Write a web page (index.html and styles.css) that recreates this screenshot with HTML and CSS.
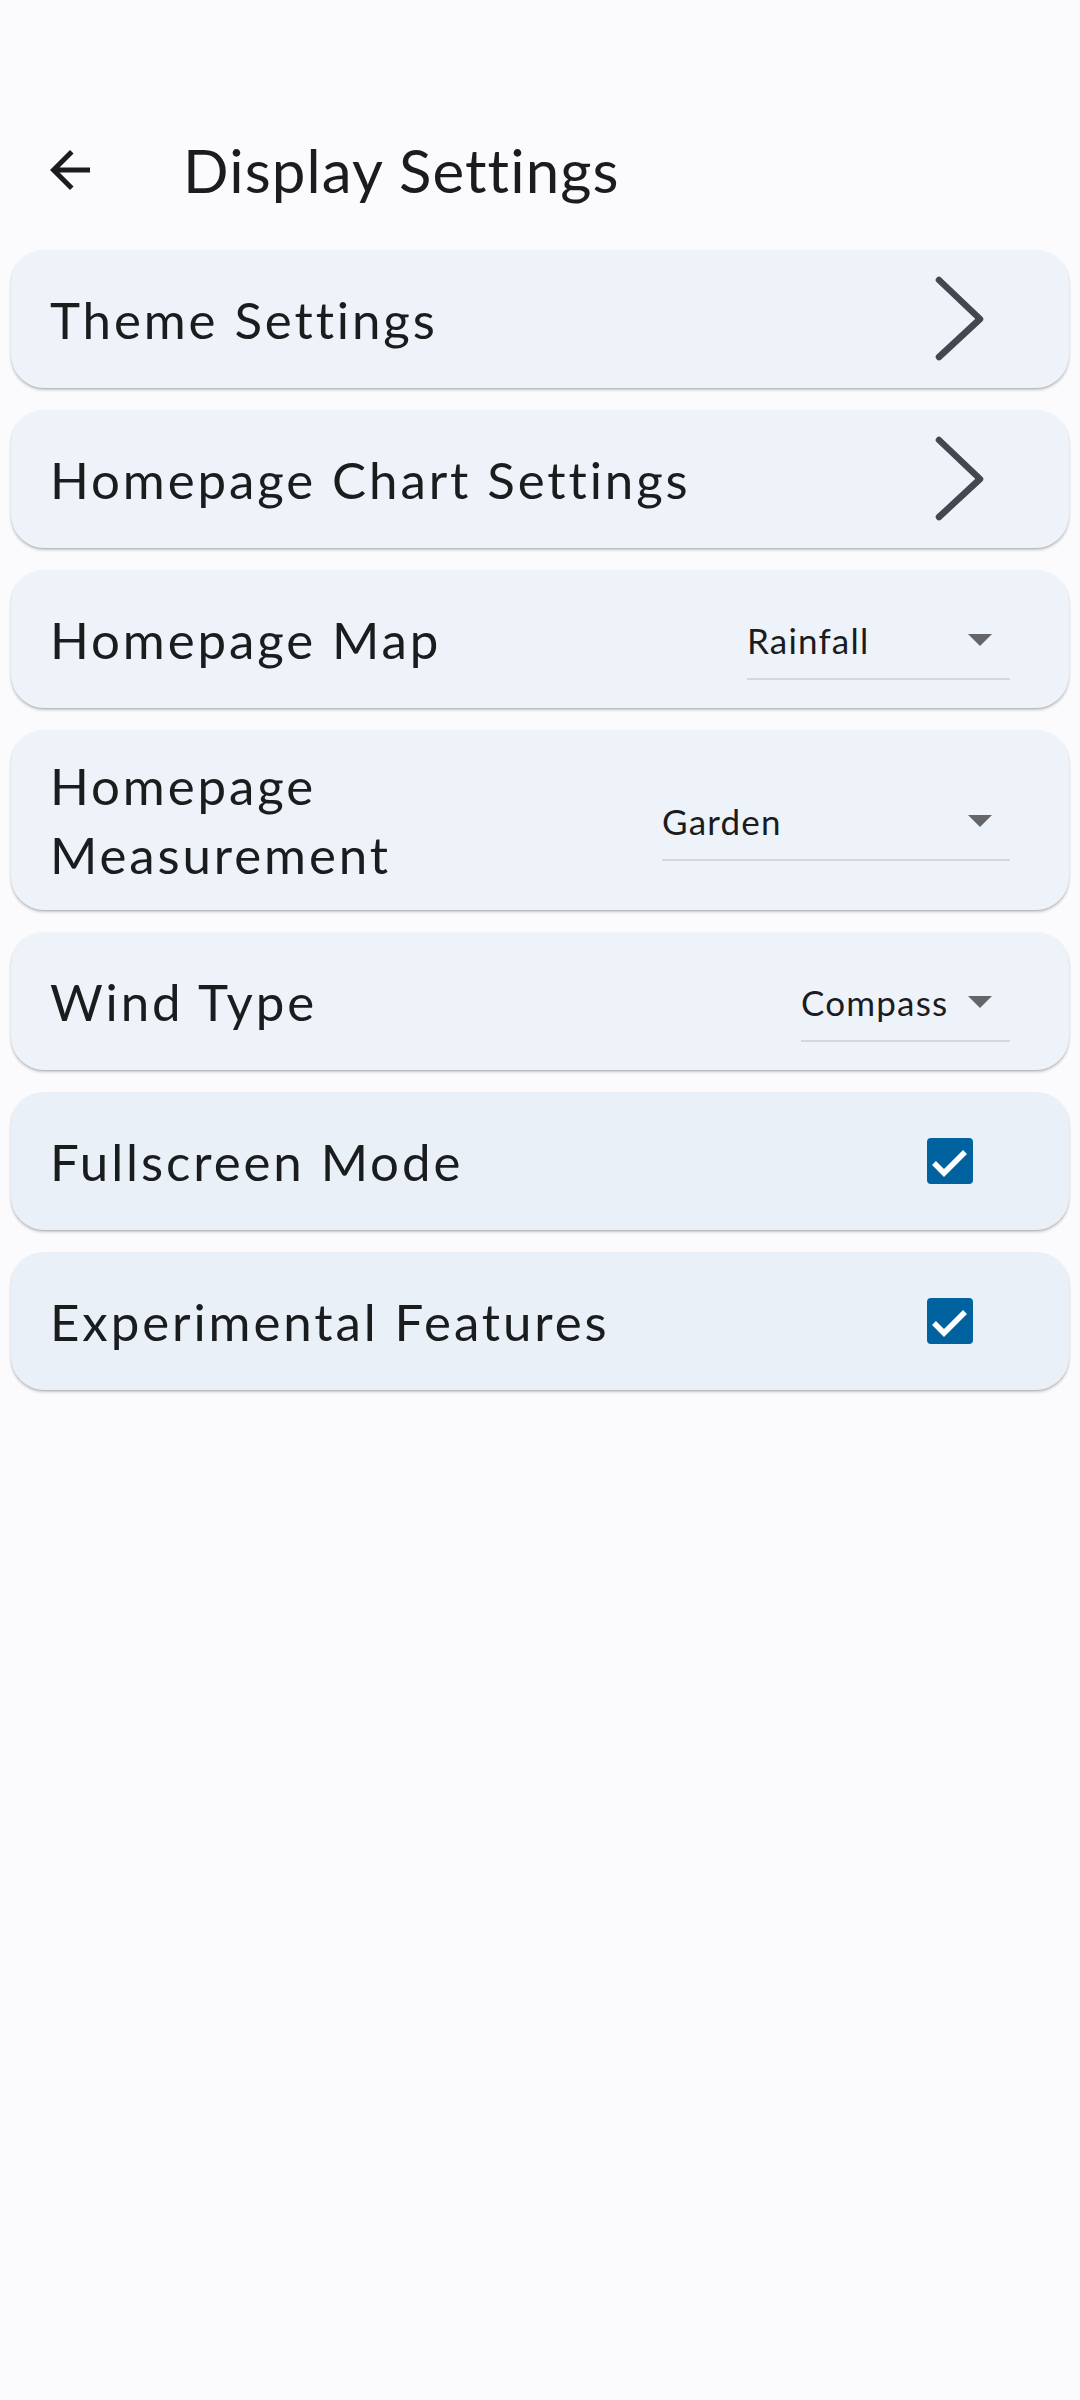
FILE: index.html
```html
<!DOCTYPE html>
<html lang="en">
<head>
<meta charset="utf-8">
<title>Display Settings</title>
<link rel="stylesheet" href="styles.css">
</head>
<body>
<header class="app-bar">
  <svg class="back" viewBox="0 0 24 24" width="60" height="60" aria-hidden="true">
    <path d="M20 11H7.83l5.59-5.59L12 4l-8 8 8 8 1.41-1.41L7.83 13H20v-2z" fill="#1a1c1e"/>
  </svg>
  <h1 class="title">Display Settings</h1>
</header>
<main class="list">
  <div class="card">
    <span class="label">Theme Settings</span>
    <svg class="chevron" width="56" height="90" viewBox="0 0 56 90" aria-hidden="true">
      <polyline points="9,6 50,45 9,83" fill="none" stroke="#43474f" stroke-width="6.5" stroke-linecap="round" stroke-linejoin="round"/>
    </svg>
  </div>
  <div class="card">
    <span class="label">Homepage Chart Settings</span>
    <svg class="chevron" width="56" height="90" viewBox="0 0 56 90" aria-hidden="true">
      <polyline points="9,6 50,45 9,83" fill="none" stroke="#43474f" stroke-width="6.5" stroke-linecap="round" stroke-linejoin="round"/>
    </svg>
  </div>
  <div class="card">
    <span class="label">Homepage Map</span>
    <div class="dropdown dropdown-map">
      <span class="dropdown-value">Rainfall</span>
      <span class="dropdown-arrow"></span>
    </div>
  </div>
  <div class="card">
    <span class="label">Homepage Measurement</span>
    <div class="dropdown dropdown-measure">
      <span class="dropdown-value">Garden</span>
      <span class="dropdown-arrow"></span>
    </div>
  </div>
  <div class="card">
    <span class="label">Wind Type</span>
    <div class="dropdown dropdown-wind">
      <span class="dropdown-value">Compass</span>
      <span class="dropdown-arrow"></span>
    </div>
  </div>
  <div class="card card-check">
    <span class="label">Fullscreen Mode</span>
    <span class="checkbox">
      <svg viewBox="0 0 46 46" width="46" height="46" aria-hidden="true">
        <polyline points="7,25 17,35 38,14" fill="none" stroke="#ffffff" stroke-width="5.5"/>
      </svg>
    </span>
  </div>
  <div class="card card-check">
    <span class="label">Experimental Features</span>
    <span class="checkbox">
      <svg viewBox="0 0 46 46" width="46" height="46" aria-hidden="true">
        <polyline points="7,25 17,35 38,14" fill="none" stroke="#ffffff" stroke-width="5.5"/>
      </svg>
    </span>
  </div>
</main>
</body>
</html>
```
FILE: styles.css
```css
html, body {
  margin: 0;
  padding: 0;
}
body {
  background: #fbfbfe;
  min-height: 2400px;
  font-family: "Lato", "Open Sans", "Noto Sans", sans-serif;
  color: #1a1c1e;
}
.app-bar {
  display: flex;
  align-items: center;
  height: 138px;
  padding: 101px 0 0 40px;
}
.back {
  display: block;
  flex: none;
}
.title {
  margin: 0 0 0 83px;
  font-size: 60px;
  font-weight: 400;
  line-height: 1;
  letter-spacing: 1.1px;
}
.list {
  display: flex;
  flex-direction: column;
  gap: 22px;
  padding: 11px 11px 0;
}
.card {
  display: flex;
  align-items: center;
  min-height: 138px;
  box-sizing: border-box;
  padding: 21px 0 21px 39px;
  background: #eef3f9;
  border-radius: 33px;
  box-shadow: 0 2px 3px rgba(0, 0, 0, 0.22), 0 1px 1px rgba(0, 0, 0, 0.08);
}
.card-check {
  background: #eaf0f8;
}
.label {
  flex: 1;
  font-size: 51px;
  line-height: 69px;
  letter-spacing: 2.9px;
  margin-right: 44px;
}
.chevron {
  display: block;
  flex: none;
  margin-right: 83px;
}
.dropdown {
  display: flex;
  align-items: center;
  flex: none;
  height: 82px;
  box-sizing: border-box;
  border-bottom: 2px solid #d4d7dc;
  padding-right: 18px;
  margin-right: 59px;
}
.dropdown-map { width: 263px; }
.dropdown-measure { width: 348px; }
.dropdown-wind { width: 209px; }
.dropdown-value {
  flex: 1;
  font-size: 35px;
  letter-spacing: 1.2px;
  padding-top: 4px;
}
.dropdown-arrow {
  width: 0;
  height: 0;
  border-left: 12px solid transparent;
  border-right: 12px solid transparent;
  border-top: 12px solid #636569;
  margin-top: 4px;
}
.checkbox {
  flex: none;
  display: block;
  width: 46px;
  height: 46px;
  border-radius: 4px;
  background: #00629f;
  margin-right: 96px;
}
.checkbox svg {
  display: block;
}
```
